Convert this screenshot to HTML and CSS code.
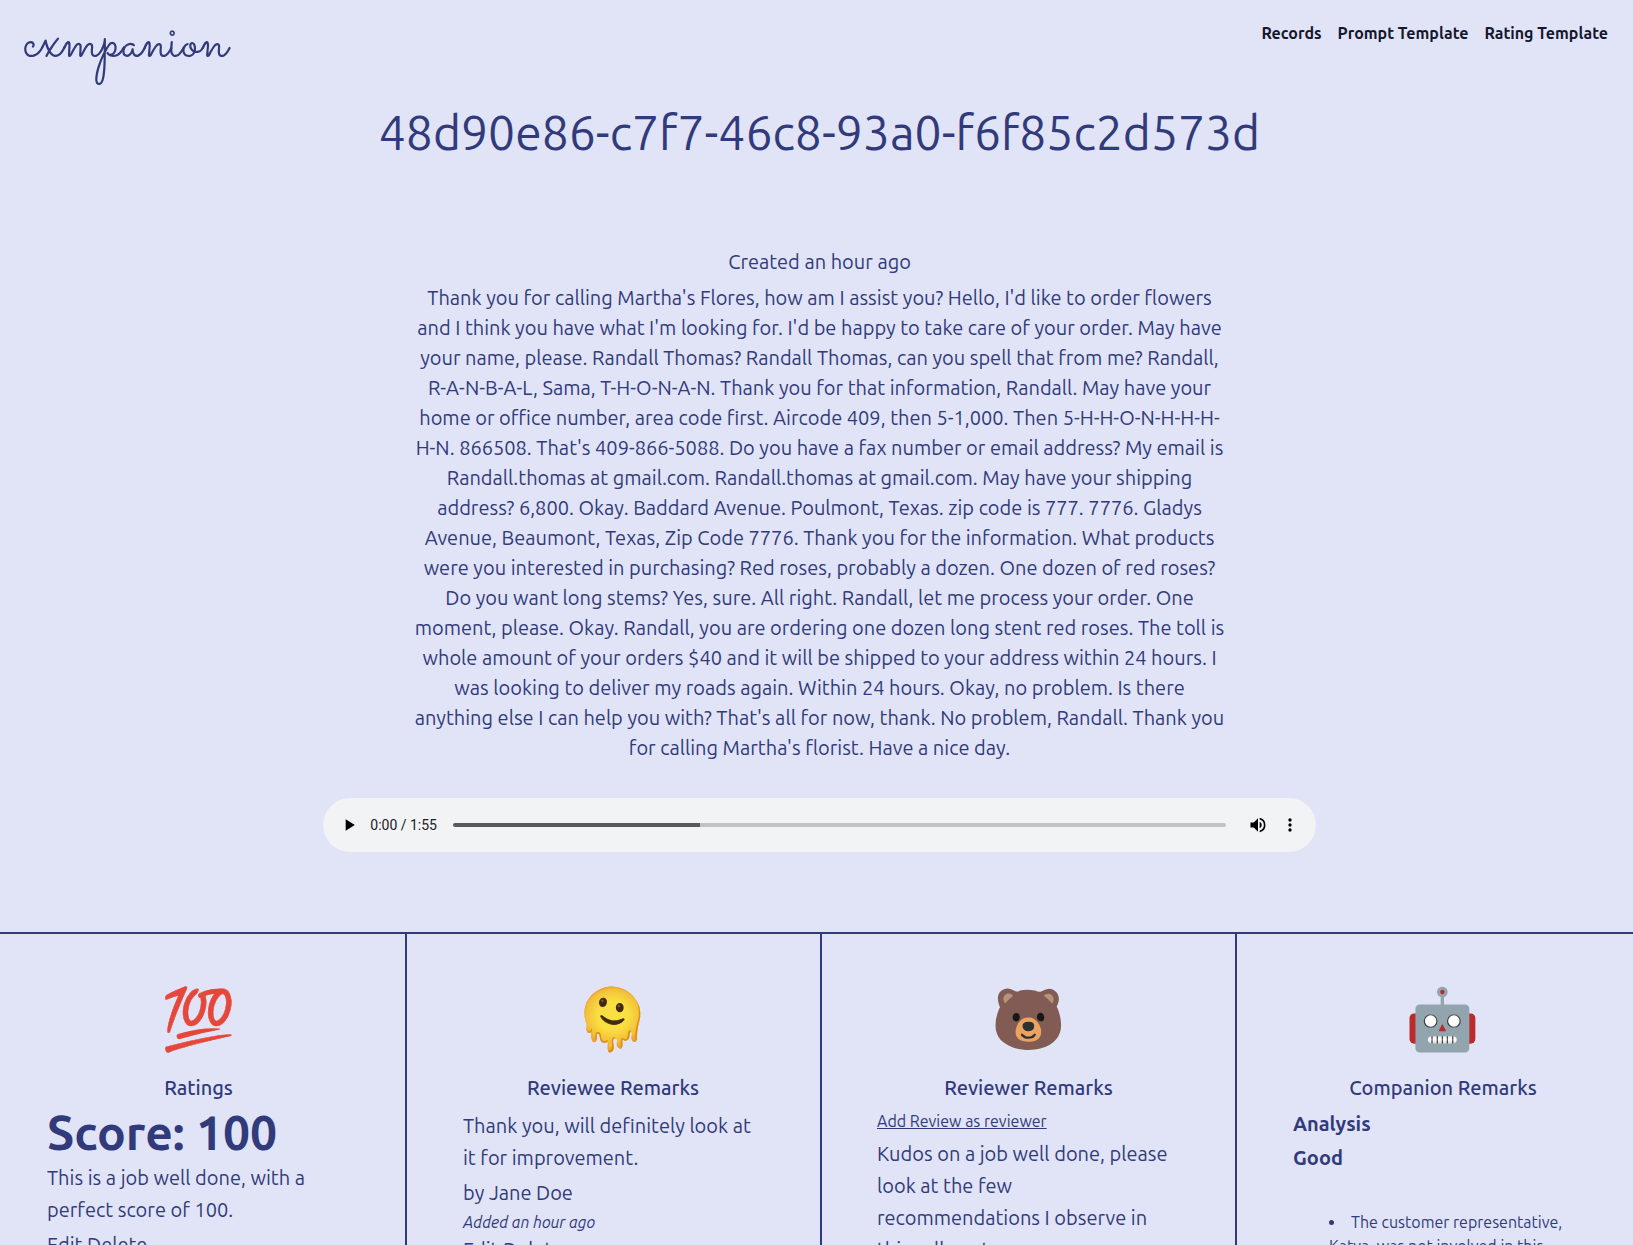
FILE: index.html
```html
<!DOCTYPE html>
<html lang="en">
<head>
<meta charset="utf-8">
<title>cxmpanion</title>
<link rel="stylesheet" href="styles.css">
</head>
<body>
<header class="topbar">
  <a class="logo" href="#">cxmpanion</a>
  <nav class="nav">
    <a href="#">Records</a>
    <a href="#">Prompt Template</a>
    <a href="#">Rating Template</a>
  </nav>
</header>

<main>
  <section class="hero">
    <h1 class="title">48d90e86-c7f7-46c8-93a0-f6f85c2d573d</h1>
    <p class="created">Created an hour ago</p>
    <p class="transcript">Thank you for calling Martha's Flores, how am I assist you? Hello, I'd like to order flowers<br>
      and I think you have what I'm looking for. I'd be happy to take care of your order. May have<br>
      your name, please. Randall Thomas? Randall Thomas, can you spell that from me? Randall,<br>
      R-A-N-B-A-L, Sama, T-H-O-N-A-N. Thank you for that information, Randall. May have your<br>
      home or office number, area code first. Aircode 409, then 5-1,000. Then 5-H-H-O-N-H-H-H-<br>
      H-N. 866508. That's 409-866-5088. Do you have a fax number or email address? My email is<br>
      Randall.thomas at gmail.com. Randall.thomas at gmail.com. May have your shipping<br>
      address? 6,800. Okay. Baddard Avenue. Poulmont, Texas. zip code is 777. 7776. Gladys<br>
      Avenue, Beaumont, Texas, Zip Code 7776. Thank you for the information. What products<br>
      were you interested in purchasing? Red roses, probably a dozen. One dozen of red roses?<br>
      Do you want long stems? Yes, sure. All right. Randall, let me process your order. One<br>
      moment, please. Okay. Randall, you are ordering one dozen long stent red roses. The toll is<br>
      whole amount of your orders $40 and it will be shipped to your address within 24 hours. I<br>
      was looking to deliver my roads again. Within 24 hours. Okay, no problem. Is there<br>
      anything else I can help you with? That's all for now, thank. No problem, Randall. Thank you<br>
      for calling Martha's florist. Have a nice day.</p>
    <div class="player">
      <button class="player-btn" type="button" aria-label="Play">
        <svg viewBox="0 0 24 24"><path d="M8 5v14l11-7z"/></svg>
      </button>
      <span class="time">0:00 / 1:55</span>
      <input class="seek" type="range" min="0" max="115" value="0" aria-label="Seek">
      <button class="player-btn" type="button" aria-label="Mute">
        <svg viewBox="0 0 24 24"><path d="M3 9v6h4l5 5V4L7 9H3zm13.5 3A4.5 4.500 0 0 0 14 7.970v8.050A4.470 4.470 0 0 0 16.500 12zM14 3.230v2.060a7 7 0 0 1 0 13.420v2.060a9 9 0 0 0 0-17.540z"/></svg>
      </button>
      <button class="player-btn" type="button" aria-label="More options">
        <svg viewBox="0 0 24 24"><path d="M12 8a2 2 0 1 0 0-4 2 2 0 0 0 0 4zm0 2a2 2 0 1 0 0 4 2 2 0 0 0 0-4zm0 6a2 2 0 1 0 0 4 2 2 0 0 0 0-4z"/></svg>
      </button>
    </div>
  </section>

  <section class="board">
    <article class="column">
      <div class="emoji">💯</div>
      <h2 class="heading">Ratings</h2>
      <p class="score">Score: 100</p>
      <p class="remark">This is a job well done, with a<br>perfect score of 100.</p>
      <p class="actions"><a href="#">Edit</a> <a href="#">Delete</a></p>
    </article>
    <article class="column">
      <div class="emoji">🫠</div>
      <h2 class="heading">Reviewee Remarks</h2>
      <p class="remark spaced">Thank you, will definitely look at<br>it for improvement.</p>
      <p class="author">by Jane Doe</p>
      <p class="added">Added an hour ago</p>
      <p><a href="#">Edit</a> <a href="#">Delete</a></p>
    </article>
    <article class="column">
      <div class="emoji">🐻</div>
      <h2 class="heading">Reviewer Remarks</h2>
      <a class="add" href="#">Add Review as reviewer</a>
      <p class="remark">Kudos on a job well done, please<br>look at the few<br>recommendations I observe in<br>this call next</p>
    </article>
    <article class="column">
      <div class="emoji">🤖</div>
      <h2 class="heading">Companion Remarks</h2>
      <div class="labels">
        <p class="label">Analysis</p>
        <p class="label">Good</p>
      </div>
      <ul class="notes">
        <li>The customer representative,<br>Katya, was not involved in this</li>
      </ul>
    </article>
  </section>
</main>
</body>
</html>
```
FILE: styles.css
```css
* { box-sizing: border-box; }

body {
  margin: 0;
  background: #e1e4f6;
  color: #313b7b;
  font-family: Ubuntu, "Noto Sans", sans-serif;
  font-weight: 400;
  font-size: 20px;
  line-height: 32px;
  overflow-x: hidden;
}

h1, h2, p, ul { margin: 0; font-weight: 400; }
a { color: inherit; text-decoration: none; }

.topbar {
  display: flex;
  justify-content: space-between;
  align-items: flex-start;
  height: 96px;
  padding: 17px 25px 0 23px;
}
.logo {
  font-family: Sacramento, "Dancing Script", Z003, Lato, sans-serif;
  font-size: 60px;
  line-height: 54px;
}
.nav {
  display: flex;
  gap: 16px;
  color: #14172e;
  font-size: 16px;
  font-weight: 600;
}

.hero {
  display: flex;
  flex-direction: column;
  align-items: center;
  padding: 0 0 80px 6px;
  text-align: center;
}
.title { font-size: 48px; line-height: 72px; }
.created { margin-top: 78px; }
.transcript { margin-top: 5px; line-height: 30px; }

.player {
  display: flex;
  align-items: center;
  width: 61%;
  height: 54px;
  margin-top: 35px;
  padding: 0 10px;
  border-radius: 27px;
  background: #f1f3f4;
}
.player-btn {
  display: flex;
  justify-content: center;
  align-items: center;
  flex: none;
  width: 32px;
  height: 32px;
  padding: 0;
  border: 0;
  background: none;
}
.player-btn svg { width: 20px; height: 20px; fill: #000; }
.time {
  margin: 0 16px 0 5px;
  color: #202124;
  font-family: Roboto, sans-serif;
  font-size: 14px;
  font-weight: 400;
  line-height: 20px;
}
.seek {
  appearance: none;
  flex: 1;
  min-width: 0;
  height: 4px;
  margin: 0 16px 0 0;
  border-radius: 2px;
  background: linear-gradient(to right, #5a5a5c 32%, #c1c2c3 32%);
}
.seek::-webkit-slider-thumb { appearance: none; width: 0; height: 0; }

.board {
  display: grid;
  grid-template-columns: repeat(4, 1fr);
  margin: 0 -19px 0 -8px;
  border-top: 2px solid #313b7b;
}
.column {
  min-height: 416px;
  padding: 48px 55px 32px;
  border-right: 2px solid #313b7b;
}
.column:nth-child(even) { padding-left: 56px; padding-right: 57px; }
.emoji {
  height: 76px;
  font-family: "Noto Color Emoji", sans-serif;
  font-size: 60px;
  line-height: 76px;
  text-align: center;
  filter: saturate(0.9);
}
.heading {
  margin-top: 14px;
  font-size: 20px;
  font-weight: 500;
  line-height: 32px;
  text-align: center;
}
.score { margin-bottom: 2px; font-size: 48px; font-weight: 700; line-height: 56px; }
.spaced { margin-top: 6px; }
.author { margin-top: 3px; }
.added { margin-top: 1px; font-size: 16px; font-style: italic; line-height: 24px; }
.actions { margin-top: 3px; }
.add {
  display: block;
  font-size: 16px;
  line-height: 34px;
  text-decoration: underline;
}
.labels { padding-top: 3px; }
.label { font-weight: 700; line-height: 34px; }
.notes {
  margin-top: 35px;
  padding-left: 36px;
  font-size: 16px;
  line-height: 24px;
  list-style-position: inside;
}
```
